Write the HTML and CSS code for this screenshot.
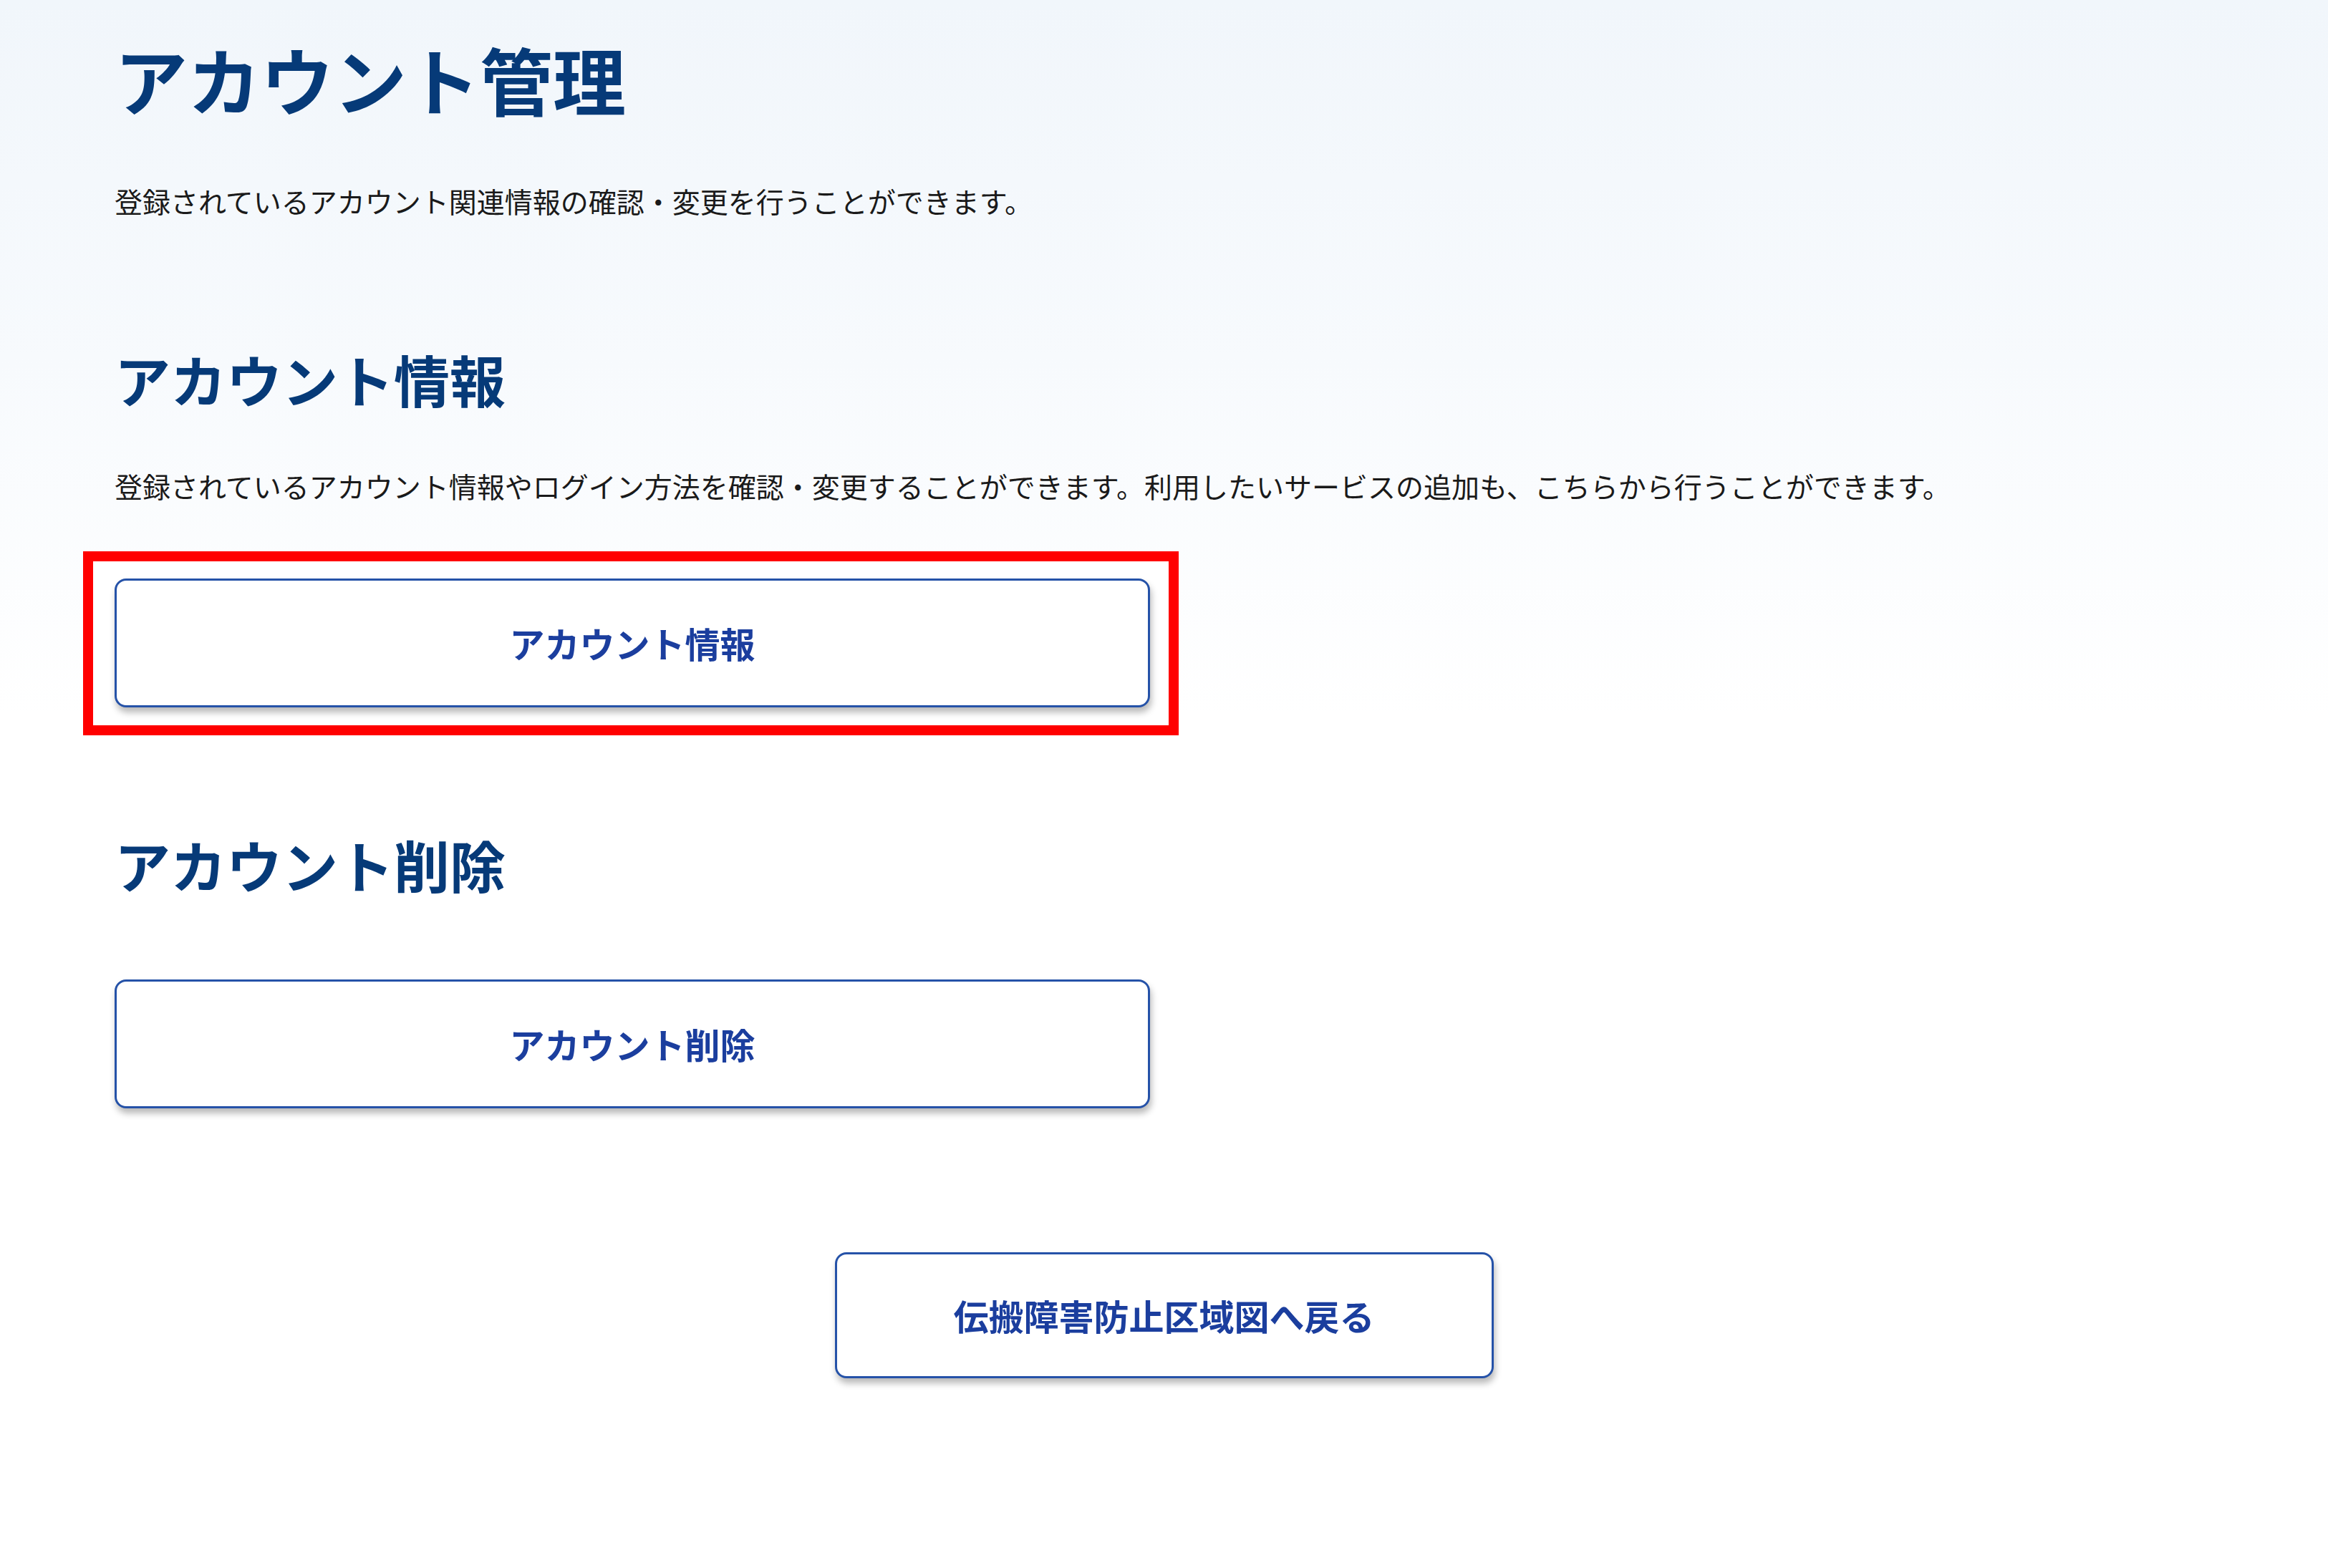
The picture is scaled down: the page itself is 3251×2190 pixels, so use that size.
FILE: index.html
```html
<!DOCTYPE html>
<html lang="ja">

<head>
    <meta charset="UTF-8">
    <meta name="viewport" content="width=device-width, initial-scale=1.0">
    <title>アカウント管理</title>

    <link rel="stylesheet" href="styles.css">
</head>

<body>
    <div class="page">
        <h1 class="title">アカウント管理</h1>
        <p class="lead">登録されているアカウント関連情報の確認・変更を行うことができます。</p>

        <section class="block">
            <h2 class="heading">アカウント情報</h2>
            <p class="desc">登録されているアカウント情報やログイン方法を確認・変更することができます。利用したいサービスの追加も、こちらから行うことができます。</p>
            <div class="highlight">
                <button class="btn">アカウント情報</button>
            </div>
        </section>

        <section class="block block-delete">
            <h2 class="heading">アカウント削除</h2>
            <button class="btn btn-delete">アカウント削除</button>
        </section>

        <div class="back">
            <button class="btn btn-back">伝搬障害防止区域図へ戻る</button>
        </div>
    </div>
</body>

</html>
```

FILE: styles.css
```css
html,
body {
    margin: 0;
    padding: 0;
}

body {
    min-height: 2190px;
    background: linear-gradient(180deg, #f1f6fb 0px, #f7fafd 500px, #ffffff 1000px);
    font-family: "Noto Sans CJK JP", "Noto Sans", sans-serif;
    color: #1a1a1a;
}

.page {
    padding: 49px 160px 0 160px;
}

.title {
    margin: 0;
    font-size: 102px;
    line-height: 1.2;
    font-weight: 700;
    color: #063a78;
}

.lead,
.desc {
    margin: 0;
    font-size: 39px;
    line-height: 1.5;
}

.lead {
    margin-top: 80px;
}

.block {
    margin-top: 173px;
}

.heading {
    margin: 0;
    font-size: 78px;
    line-height: 1.2;
    font-weight: 700;
    color: #063a78;
}

.desc {
    margin-top: 73px;
}

/* red frame drawn round the button */
.highlight {
    width: fit-content;
    margin-top: 62px;
    margin-left: -44px;
    padding: 24px 26px 25px 30px;
    border: 14px solid #ff0000;
    background: #ffffff;
}

.block-delete {
    margin-top: 134px;
}

.btn {
    display: flex;
    align-items: center;
    justify-content: center;
    width: 1446px;
    height: 180px;
    padding: 0;
    border: 3px solid #2552a8;
    border-radius: 16px;
    background: #ffffff;
    box-shadow: 2px 7px 10px rgba(0, 0, 0, 0.28);
    font-family: "Noto Sans CJK JP", "Noto Sans", sans-serif;
    font-size: 49px;
    font-weight: 700;
    color: #1b3e9e;
    cursor: pointer;
}

.btn-delete {
    margin-top: 113px;
}

.back {
    display: flex;
    justify-content: center;
    margin-top: 201px;
}

.btn-back {
    width: 920px;
    height: 176px;
}
```
